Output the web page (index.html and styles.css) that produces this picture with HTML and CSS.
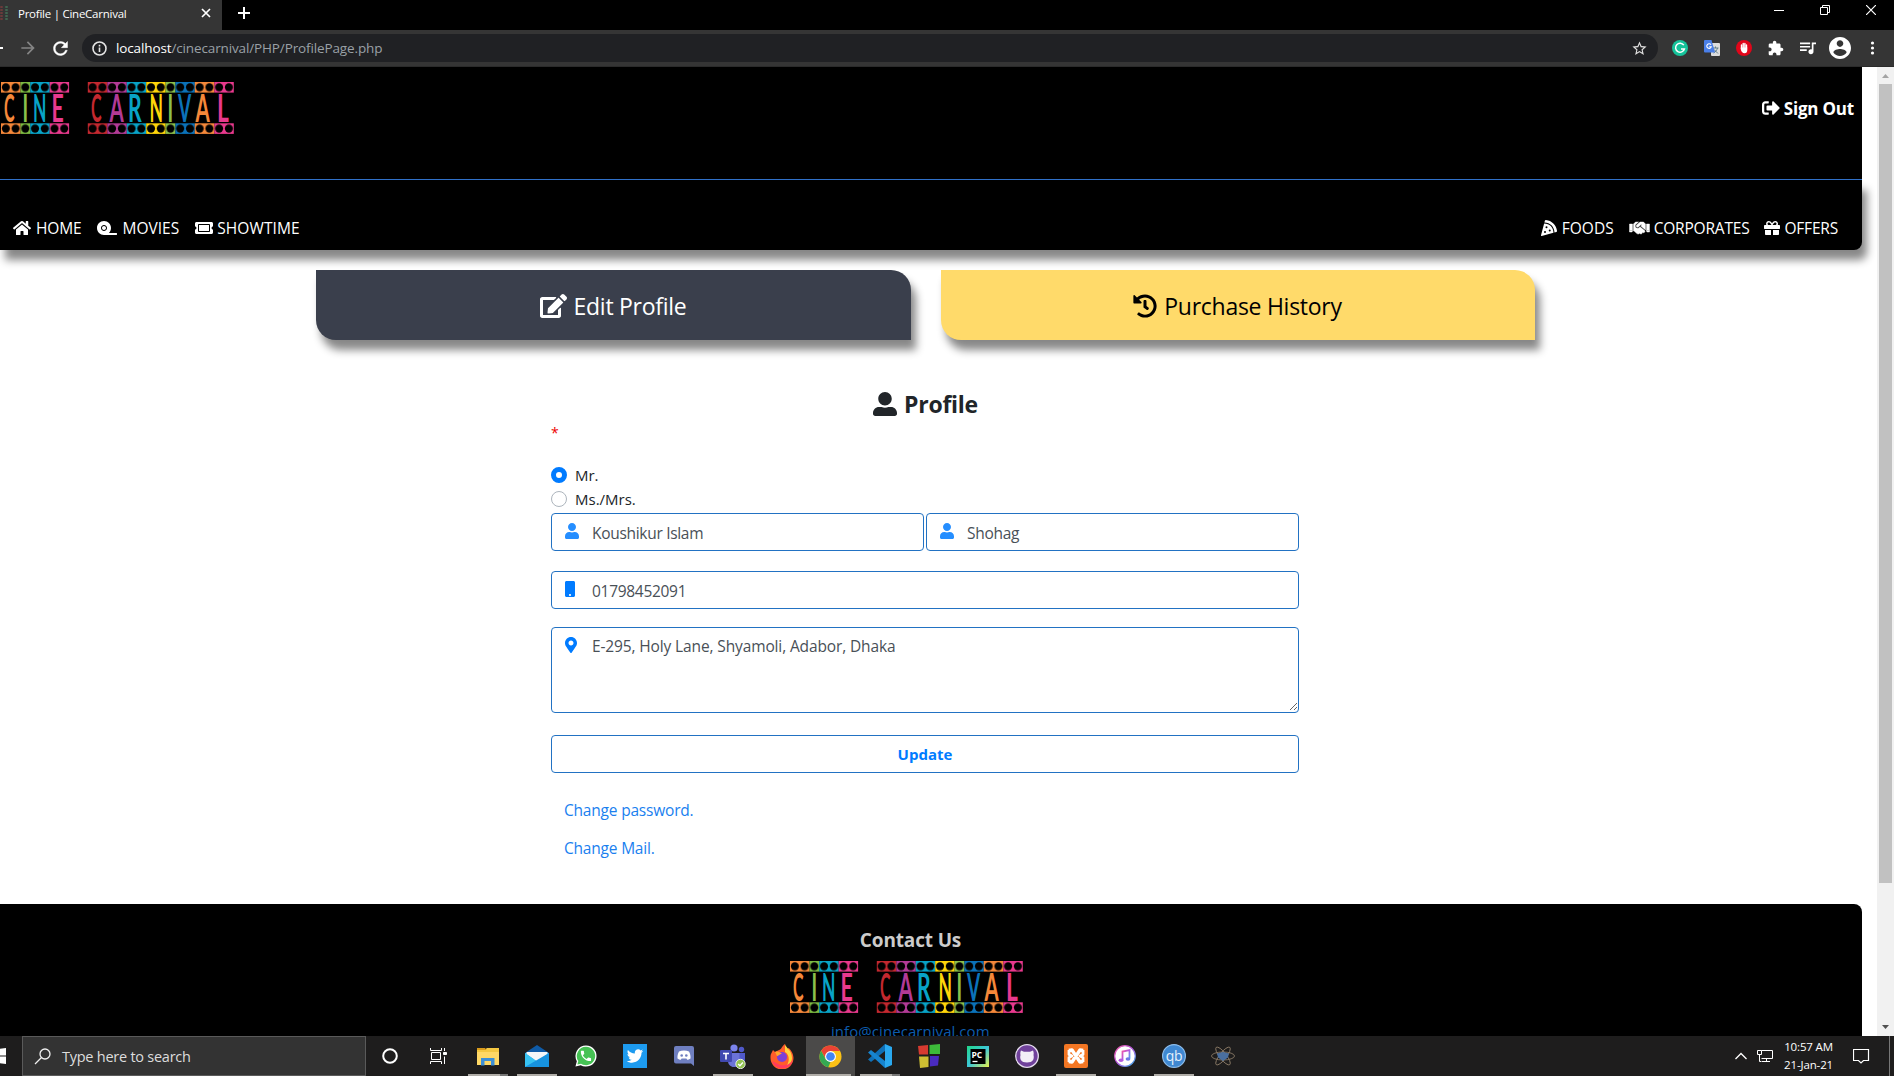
FILE: index.html
```html
<!DOCTYPE html>
<html lang="en">
<head>
<meta charset="utf-8">
<title>Profile | CineCarnival</title>
<link rel="stylesheet" href="styles.css">
</head>
<body>
<div class="titlebar">
  <div class="tab">
    <svg class="favicon" width="9" height="14" viewBox="0 0 9 14"><path d="M1.500 0v14" stroke="#6b3b3b" stroke-width="2.500" stroke-dasharray="2 1"/><path d="M6.500 0v14" stroke="#3f6650" stroke-width="2.500" stroke-dasharray="2 1"/></svg>
    <span class="tab-title">Profile | CineCarnival</span>
    <svg class="tab-close" width="10" height="10" viewBox="0 0 10 10"><path d="M1 1l8 8M9 1l-8 8" stroke="#fff" stroke-width="1.700"/></svg>
  </div>
  <svg class="new-tab" width="12" height="12" viewBox="0 0 12 12"><path d="M6 0v12M0 6h12" stroke="#fff" stroke-width="2"/></svg>
  <div class="window-buttons">
    <svg width="10" height="10" viewBox="0 0 10 10"><path d="M0 5.500h10" stroke="#fff"/></svg>
    <svg width="10" height="10" viewBox="0 0 10 10" fill="none" stroke="#fff"><path d="M.5 2.500h7v7h-7zM2.500 2.500v-2h7v7h-2"/></svg>
    <svg width="10" height="10" viewBox="0 0 10 10"><path d="M0 0l10 10M10 0L0 10" stroke="#fff" stroke-width="1.200"/></svg>
  </div>
</div>
<div class="toolbar">
  <svg class="back" width="3" height="14" viewBox="0 0 3 14"><path d="M0 7h3" stroke="#fff" stroke-width="2"/></svg>
  <svg class="forward" width="20" height="20" viewBox="0 0 24 24"><path fill="#858585" d="M12 4l-1.410 1.410L16.170 11H4v2h12.170l-5.580 5.590L12 20l8-8z"/></svg>
  <svg class="reload" width="21" height="21" viewBox="0 0 24 24"><path fill="#fff" stroke="#fff" stroke-width=".5" d="M17.650 6.350C16.200 4.900 14.210 4 12 4c-4.420 0-7.990 3.580-7.990 8s3.570 8 7.990 8c3.730 0 6.840-2.550 7.730-6h-2.080c-.82 2.330-3.040 4-5.650 4-3.310 0-6-2.690-6-6s2.690-6 6-6c1.660 0 3.140.69 4.220 1.780L13 11h7V4l-2.350 2.350z"/></svg>
  <div class="omnibox">
    <svg width="15" height="15" viewBox="0 0 15 15" fill="none" stroke="#e4e4e4" stroke-width="1.600"><circle cx="7.500" cy="7.500" r="6.500"/><path d="M7.500 6.500v4.500M7.500 3.800v1.700"/></svg>
    <span class="url"><b>localhost</b>/cinecarnival/PHP/ProfilePage.php</span>
    <svg class="star" width="17" height="17" viewBox="0 0 24 24"><path fill="#e0e0e0" d="M22 9.240l-7.190-.62L12 2 9.190 8.630 2 9.240l5.460 4.730L5.820 21 12 17.270 18.180 21l-1.630-7.030L22 9.240zM12 15.400l-3.760 2.270 1-4.280-3.320-2.880 4.380-.38L12 6.100l1.710 4.040 4.380.38-3.320 2.880 1 4.280L12 15.400z"/></svg>
  </div>
  <div class="extensions">
    <svg width="16" height="16" viewBox="0 0 16 16"><circle cx="8" cy="8" r="8" fill="#15c39a"/><path d="M11.800 5.200A4.500 4.500 0 1 0 12.400 9H9" fill="none" stroke="#fff" stroke-width="1.500"/></svg>
    <svg width="16" height="16" viewBox="0 0 16 16"><rect x="7" y="3" width="9" height="13" rx="1" fill="#dcdcdc"/><path d="M8.500 8h6M11.500 6.500V8M13.500 8c-.5 2-2 4-4 5M10 9.500l4 4" stroke="#5f7f8a" fill="none"/><path d="M1 0h6.500L11 12.500H1a1 1 0 0 1-1-1V1a1 1 0 0 1 1-1z" fill="#4a7fe8"/><path d="M7 4.800A2.300 2.300 0 1 0 7.300 6.700H5.200" fill="none" stroke="#fff" stroke-width="1.100"/></svg>
    <svg width="16" height="16" viewBox="0 0 16 16"><circle cx="8" cy="8" r="8" fill="#e1061a"/><path d="M5.500 9V5M7.200 8V3.500M8.900 8V3.500M10.500 8V5" stroke="#fff" stroke-width="1.400" stroke-linecap="round"/><path d="M4.800 7.500h6.500V10c0 2-1 3.300-2.800 3.300C6.500 13.300 5 11.500 4.800 9z" fill="#fff"/></svg>
    <svg width="16" height="16" viewBox="1 0 23 23"><path fill="#fff" d="M20.500 11H19V7c0-1.100-.9-2-2-2h-4V3.500C13 2.120 11.880 1 10.500 1S8 2.120 8 3.500V5H4c-1.100 0-1.990.9-1.990 2v3.800H3.500c1.490 0 2.700 1.210 2.700 2.700s-1.210 2.700-2.700 2.700H2V20c0 1.100.9 2 2 2h3.800v-1.500c0-1.490 1.210-2.700 2.700-2.700 1.490 0 2.700 1.210 2.700 2.700V22H17c1.100 0 2-.9 2-2v-4h1.500c1.380 0 2.500-1.120 2.500-2.500S21.880 11 20.500 11z"/></svg>
    <svg width="16" height="16" viewBox="3 3 19 19"><path fill="#fff" d="M15 6H3v2h12V6zm0 4H3v2h12v-2zM3 16h8v-2H3v2zM17 6v8.180c-.31-.11-.65-.18-1-.18-1.660 0-3 1.340-3 3s1.340 3 3 3 3-1.340 3-3V8h3V6h-5z"/></svg>
    <svg class="avatar" width="22" height="22" viewBox="2 2 20 20"><path fill="#fff" d="M12 2C6.480 2 2 6.480 2 12s4.480 10 10 10 10-4.480 10-10S17.520 2 12 2zm0 3c1.660 0 3 1.340 3 3s-1.340 3-3 3-3-1.340-3-3 1.340-3 3-3zm0 14.200c-2.500 0-4.710-1.280-6-3.220.03-1.990 4-3.080 6-3.080 1.990 0 5.970 1.090 6 3.080-1.290 1.940-3.500 3.220-6 3.220z"/></svg>
    <svg width="16" height="16" viewBox="0 0 16 16" fill="#fff"><circle cx="8.500" cy="3" r="1.600"/><circle cx="8.500" cy="8" r="1.600"/><circle cx="8.500" cy="13" r="1.600"/></svg>
  </div>
</div>

<div class="viewport">
  <div class="page">
    <header class="site-header">
      <div class="brand-row">
        <svg class="logo" width="236" height="54" viewBox="0 0 236 54">
          <defs>
            <pattern id="holes" width="9.730" height="10.600" patternUnits="userSpaceOnUse"><circle cx="4.865" cy="5.300" r="4" fill="#000"/></pattern>
            <g id="strip">
              <path fill="#f5883a" d="M0 0h19.500v10.600H0z"/><path fill="#7dbb42" d="M19.500 0h9.700v10.600h-9.700z"/><path fill="#08a3c7" d="M29.200 0h19.500v10.600H29.200z"/><path fill="#e8398d" d="M48.700 0h19.400v10.600H48.700z"/><path fill="url(#holes)" d="M0 0h68.110v10.600H0z"/>
              <g transform="translate(86.800)"><path fill="#c4282f" d="M0 0h19.500v10.600H0z"/><path fill="#b23a96" d="M19.500 0H39v10.600H19.500z"/><path fill="#08a3c7" d="M39 0h19.400v10.600H39z"/><path fill="#ffd50a" d="M58.400 0h19.400v10.600H58.400z"/><path fill="#8cc04b" d="M77.800 0h9.800v10.600h-9.800z"/><path fill="#0b72b9" d="M87.600 0H107v10.600H87.600z"/><path fill="#f5883a" d="M107 0h19.500v10.600H107z"/><path fill="#e8398d" d="M126.500 0h19.500v10.600h-19.500z"/><path fill="url(#holes)" d="M0 0h146v10.600H0z"/></g>
            </g>
          </defs>
          <use href="#strip" x="1" y="0"/><use href="#strip" x="1" y="41.300"/>
          <g class="logo-letters">
            <text transform="translate(4 40) scale(.42 1)" fill="#f5883a">C</text><text transform="translate(22.500 40) scale(.5 1)" fill="#8cc04b">I</text><text transform="translate(33 40) scale(.46 1)" fill="#08a3c7">N</text><text transform="translate(51.500 40) scale(.56 1)" fill="#e8398d">E</text>
            <text transform="translate(91 40) scale(.42 1)" fill="#c4282f">C</text><text transform="translate(109.500 40) scale(.54 1)" fill="#b23a96">A</text><text transform="translate(128 40) scale(.56 1)" fill="#08a3c7">R</text><text transform="translate(149.500 40) scale(.46 1)" fill="#ffd50a">N</text><text transform="translate(167.500 40) scale(.5 1)" fill="#8cc04b">I</text><text transform="translate(178 40) scale(.5 1)" fill="#0b72b9">V</text><text transform="translate(195.500 40) scale(.54 1)" fill="#f5883a">A</text><text transform="translate(217 40) scale(.6 1)" fill="#e8398d">L</text>
          </g>
        </svg>
        <a class="sign-out" href="#"><svg width="18" height="18" viewBox="0 0 512 512"><path fill="currentColor" d="M497 273L329 441c-15 15-41 4.500-41-17v-96H152c-13.300 0-24-10.700-24-24v-96c0-13.300 10.700-24 24-24h136V88c0-21.400 25.900-32 41-17l168 168c9.300 9.400 9.300 24.600 0 34zM192 436v-40c0-6.600-5.400-12-12-12H96c-17.700 0-32-14.300-32-32V160c0-17.700 14.300-32 32-32h84c6.600 0 12-5.400 12-12V76c0-6.600-5.400-12-12-12H96c-53 0-96 43-96 96v192c0 53 43 96 96 96h84c6.600 0 12-5.400 12-12z"/></svg><span>Sign Out</span></a>
      </div>
      <nav class="nav">
        <a class="home" href="#"><svg width="18" height="16" viewBox="0 0 576 512"><path fill="currentColor" d="M280.370 148.260L96 300.110V464a16 16 0 0 0 16 16l112.060-.29a16 16 0 0 0 15.920-16V368a16 16 0 0 1 16-16h64a16 16 0 0 1 16 16v95.640a16 16 0 0 0 16 16.050L464 480a16 16 0 0 0 16-16V300L295.670 148.260a12.190 12.190 0 0 0-15.300 0zM571.600 251.470L488 182.560V44.050a12 12 0 0 0-12-12h-56a12 12 0 0 0-12 12v72.610L318.470 43a48 48 0 0 0-61 0L4.340 251.470a12 12 0 0 0-1.600 16.900l25.500 31A12 12 0 0 0 45.150 301l235.220-193.740a12.190 12.190 0 0 1 15.300 0L530.900 301a12 12 0 0 0 16.900-1.600l25.500-31a12 12 0 0 0-1.700-16.930z"/></svg><span>HOME</span></a>
        <a class="movies" href="#"><svg width="20" height="16" viewBox="0 0 640 512"><path fill="currentColor" d="M224 192c-35.300 0-64 28.700-64 64s28.700 64 64 64 64-28.700 64-64-28.700-64-64-64zm400 224H380.600c41.500-40.700 67.400-97.300 67.400-160 0-123.700-100.300-224-224-224S0 132.300 0 256s100.300 224 224 224h400c8.800 0 16-7.200 16-16v-32c0-8.800-7.200-16-16-16zm-400-64c-53 0-96-43-96-96s43-96 96-96 96 43 96 96-43 96-96 96z"/></svg><span>MOVIES</span></a>
        <a class="showtime" href="#"><svg width="18" height="16" viewBox="0 0 576 512"><path fill="currentColor" d="M128 160h320v192H128V160zm400 96c0 26.510 21.490 48 48 48v96c0 26.510-21.490 48-48 48H48c-26.510 0-48-21.490-48-48v-96c26.510 0 48-21.490 48-48s-21.490-48-48-48v-96c0-26.510 21.490-48 48-48h480c26.510 0 48 21.490 48 48v96c-26.510 0-48 21.490-48 48zm-48-104c0-13.255-10.745-24-24-24H120c-13.255 0-24 10.745-24 24v208c0 13.255 10.745 24 24 24h336c13.255 0 24-10.745 24-24V152z"/></svg><span>SHOWTIME</span></a>
        <a class="foods" href="#"><svg width="16" height="16" viewBox="0 0 512 512"><path fill="currentColor" d="M158.870.15c-16.160-1.520-31.200 8.420-35.330 24.120l-14.810 56.270c187.620 5.490 314.540 130.610 322.480 317l56.940-15.780c15.720-4.360 25.490-19.680 23.620-35.900C490.890 165.080 340.780 17.320 158.870.15zm-58.470 112L.55 491.640a16.210 16.210 0 0 0 20 19.750l379-105.100c-4.270-174.890-123.080-292.140-299.150-294.100zM128 416a32 32 0 1 1 32-32 32 32 0 0 1-32 32zm48-152a32 32 0 1 1 32-32 32 32 0 0 1-32 32zm104 104a32 32 0 1 1 32-32 32 32 0 0 1-32 32z"/></svg><span>FOODS</span></a>
        <a class="corporates" href="#"><svg width="21" height="16" viewBox="0 0 640 512"><path fill="currentColor" stroke="currentColor" stroke-width="14" d="M434.700 64h-85.900c-8 0-15.700 3-21.600 8.400l-98.300 90c-.1.1-.2.3-.3.4-16.600 15.600-16.300 40.500-2.100 56 12.700 13.900 39.400 17.600 56.100 2.700.1-.1.3-.1.4-.2l79.900-73.200c6.500-5.900 16.700-5.500 22.600 1 6 6.500 5.500 16.600-1 22.600l-26.100 23.900L504 313.800c2.900 2.400 5.500 5 7.900 7.700V128l-54.600-54.600c-5.900-6-14.100-9.400-22.600-9.400zM544 128.200v223.900c0 17.700 14.300 32 32 32h64V128.200h-96zm48 223.900c-8.800 0-16-7.200-16-16s7.200-16 16-16 16 7.200 16 16-7.200 16-16 16zM0 384h64c17.700 0 32-14.300 32-32V128.200H0V384zm48-63.900c8.800 0 16 7.200 16 16s-7.200 16-16 16-16-7.200-16-16c0-8.900 7.200-16 16-16zm435.900 18.600L334.600 217.500l-30 27.500c-29.700 27.100-75.200 24.500-101.700-4.400-26.900-29.400-24.800-74.900 4.400-101.700L289.100 64h-83.800c-8.500 0-16.600 3.400-22.600 9.400L128 128v223.900h18.300l90.500 81.900c27.400 22.300 67.700 18.100 90-9.300l.2-.2 17.900 15.500c15.900 13 39.400 10.500 52.300-5.400l31.400-38.600 5.400 4.400c13.700 11.100 33.900 9.100 45-4.700l9.500-11.700c11.200-13.800 9.100-33.900-4.600-45.100z"/></svg><span>CORPORATES</span></a>
        <a class="offers" href="#"><svg width="16" height="16" viewBox="0 0 512 512"><path fill="currentColor" d="M32 448c0 17.700 14.300 32 32 32h160V320H32v128zm256 32h160c17.700 0 32-14.300 32-32V320H288v160zm192-320h-42.100c6.200-12.100 10.100-25.500 10.100-40 0-48.500-39.500-88-88-88-41.600 0-68.500 21.300-103 68.300-34.500-47-61.400-68.300-103-68.300-48.500 0-88 39.500-88 88 0 14.500 3.800 27.900 10.100 40H32c-17.700 0-32 14.300-32 32v80c0 8.800 7.200 16 16 16h480c8.800 0 16-7.200 16-16v-80c0-17.700-14.300-32-32-32zm-326.100 0c-22.100 0-40-17.900-40-40s17.900-40 40-40c19.900 0 34.600 3.300 86.100 80h-86.100zm206.100 0h-86.100c51.400-76.500 65.700-80 86.100-80 22.100 0 40 17.900 40 40s-17.900 40-40 40z"/></svg><span>OFFERS</span></a>
      </nav>
    </header>

    <div class="profile-tabs">
      <a class="profile-tab edit" href="#"><svg width="27" height="24" viewBox="0 0 576 512"><path fill="currentColor" d="M402.600 83.200l90.200 90.200c3.800 3.800 3.800 10 0 13.800L274.400 405.600l-92.800 10.300c-12.400 1.400-22.900-9.100-21.500-21.500l10.300-92.800L388.800 83.200c3.800-3.800 10-3.800 13.800 0zm162-22.900l-48.800-48.800c-15.200-15.200-39.900-15.200-55.200 0l-35.400 35.400c-3.800 3.800-3.800 10 0 13.800l90.200 90.200c3.800 3.800 10 3.800 13.800 0l35.400-35.400c15.200-15.300 15.200-40 0-55.200zM384 346.200V448H64V128h229.800c3.200 0 6.200-1.300 8.500-3.500l40-40c7.600-7.600 2.200-20.500-8.500-20.500H48C21.500 64 0 85.500 0 112v352c0 26.500 21.500 48 48 48h352c26.500 0 48-21.500 48-48V306.200c0-10.700-12.900-16-20.500-8.500l-40 40c-2.200 2.300-3.500 5.300-3.500 8.500z"/></svg><span>Edit Profile</span></a>
      <a class="profile-tab history" href="#"><svg width="24" height="24" viewBox="0 0 512 512"><path fill="currentColor" d="M504 255.531c.253 136.640-111.180 248.372-247.820 248.468-59.015.042-113.223-20.530-155.822-54.911-11.077-8.940-11.905-25.541-1.839-35.607l11.267-11.267c8.609-8.609 22.353-9.551 31.891-1.984C173.062 425.135 212.781 440 256 440c101.705 0 184-82.311 184-184 0-101.705-82.311-184-184-184-48.814 0-93.149 18.969-126.068 49.932l50.754 50.754c10.080 10.080 2.941 27.314-11.313 27.314H24c-8.837 0-16-7.163-16-16V38.627c0-14.254 17.234-21.393 27.314-11.314l49.372 49.372C129.209 34.136 189.552 8 256 8c136.810 0 247.747 110.780 248 247.531zm-180.912 78.784l9.823-12.630c8.138-10.463 6.253-25.542-4.210-33.679L288 256.349V152c0-13.255-10.745-24-24-24h-16c-13.255 0-24 10.745-24 24v135.651l65.409 50.874c10.463 8.137 25.541 6.253 33.679-4.210z"/></svg><span>Purchase History</span></a>
    </div>

    <h2 class="profile-heading"><svg width="24" height="24" viewBox="0 0 512 512"><path fill="currentColor" d="M256 288c79.500 0 144-64.500 144-144S335.500 0 256 0 112 64.500 112 144s64.500 144 144 144zm128 32h-55.100c-22.200 10.200-46.900 16-72.900 16s-50.600-5.800-72.900-16H128C57.300 320 0 377.300 0 448v16c0 26.500 21.500 48 48 48h416c26.500 0 48-21.500 48-48v-16c0-70.700-57.300-128-128-128z"/></svg><span>Profile</span></h2>

    <form class="profile-form">
      <div class="required">*</div>
      <label class="radio"><input type="radio" name="title" checked><span>Mr.</span></label>
      <label class="radio"><input type="radio" name="title"><span>Ms./Mrs.</span></label>
      <div class="name-row">
        <div class="field">
          <svg class="soft" width="14" height="16" viewBox="0 0 448 512"><path fill="#007bff" d="M224 256c70.700 0 128-57.300 128-128S294.700 0 224 0 96 57.300 96 128s57.300 128 128 128zm89.600 32h-16.700c-22.200 10.200-46.900 16-72.900 16s-50.600-5.800-72.900-16h-16.700C60.200 288 0 348.200 0 422.400V464c0 26.500 21.500 48 48 48h352c26.500 0 48-21.500 48-48v-41.600c0-74.200-60.200-134.400-134.400-134.400z"/></svg>
          <input type="text" value="Koushikur Islam">
        </div>
        <div class="field">
          <svg class="soft" width="14" height="16" viewBox="0 0 448 512"><path fill="#007bff" d="M224 256c70.700 0 128-57.300 128-128S294.700 0 224 0 96 57.300 96 128s57.300 128 128 128zm89.600 32h-16.700c-22.200 10.200-46.900 16-72.900 16s-50.600-5.800-72.900-16h-16.700C60.200 288 0 348.200 0 422.400V464c0 26.500 21.500 48 48 48h352c26.500 0 48-21.500 48-48v-41.600c0-74.200-60.200-134.400-134.400-134.400z"/></svg>
          <input type="text" value="Shohag">
        </div>
      </div>
      <div class="field phone">
        <svg width="10" height="16" viewBox="0 0 320 512"><path fill="#007bff" d="M272 0H48C21.500 0 0 21.500 0 48v416c0 26.500 21.500 48 48 48h224c26.500 0 48-21.500 48-48V48c0-26.500-21.500-48-48-48zM160 480c-17.700 0-32-14.300-32-32s14.300-32 32-32 32 14.300 32 32-14.300 32-32 32z"/></svg>
        <input type="text" value="01798452091">
      </div>
      <div class="field address">
        <svg width="12" height="16" viewBox="0 0 384 512"><path fill="#007bff" d="M172.268 501.670C26.970 291.031 0 269.413 0 192 0 85.961 85.961 0 192 0s192 85.961 192 192c0 77.413-26.970 99.031-172.268 309.670-9.535 13.774-29.930 13.773-39.464 0zM192 272c44.183 0 80-35.817 80-80s-35.817-80-80-80-80 35.817-80 80 35.817 80 80 80z"/></svg>
        <textarea spellcheck="false">E-295, Holy Lane, Shyamoli, Adabor, Dhaka</textarea>
      </div>
      <button type="button" class="update">Update</button>
      <a class="form-link" href="#">Change password.</a>
      <a class="form-link" href="#">Change Mail.</a>
    </form>

    <footer class="site-footer">
      <div class="contact-title">Contact Us</div>
      <svg class="logo" width="236" height="54" viewBox="0 0 236 54">
        <use href="#strip" x="1" y="0"/><use href="#strip" x="1" y="41.300"/>
        <g class="logo-letters">
          <text transform="translate(4 40) scale(.42 1)" fill="#f5883a">C</text><text transform="translate(22.500 40) scale(.5 1)" fill="#8cc04b">I</text><text transform="translate(33 40) scale(.46 1)" fill="#08a3c7">N</text><text transform="translate(51.500 40) scale(.56 1)" fill="#e8398d">E</text>
          <text transform="translate(91 40) scale(.42 1)" fill="#c4282f">C</text><text transform="translate(109.500 40) scale(.54 1)" fill="#b23a96">A</text><text transform="translate(128 40) scale(.56 1)" fill="#08a3c7">R</text><text transform="translate(149.500 40) scale(.46 1)" fill="#ffd50a">N</text><text transform="translate(167.500 40) scale(.5 1)" fill="#8cc04b">I</text><text transform="translate(178 40) scale(.5 1)" fill="#0b72b9">V</text><text transform="translate(195.500 40) scale(.54 1)" fill="#f5883a">A</text><text transform="translate(217 40) scale(.6 1)" fill="#e8398d">L</text>
        </g>
      </svg>
      <a class="contact-mail" href="#">info@cinecarnival.com</a>
    </footer>
  </div>
  <div class="scrollbar">
    <svg width="17" height="17" viewBox="0 0 17 17"><path d="M5 11h7L8.500 7z" fill="#a3a3a3"/></svg>
    <div class="thumb"></div>
    <svg width="17" height="17" viewBox="0 0 17 17"><path d="M5 6h7l-3.500 4z" fill="#505050"/></svg>
  </div>
</div>

<div class="taskbar">
  <svg class="start" width="6" height="16" viewBox="0 0 6 16"><path d="M0 .8L6 0v7.500H0zM0 8.500h6V16l-6-.8z" fill="#fff"/></svg>
  <div class="search"><svg width="18" height="17" viewBox="0 0 18 17" fill="none" stroke="#f0f0f0" stroke-width="1.300"><circle cx="11" cy="6" r="5"/><path d="M7.500 9.500L1 16"/></svg><span>Type here to search</span></div>
  <div class="task"><svg width="16" height="16" viewBox="0 0 16 16"><circle cx="8" cy="8" r="6.800" fill="none" stroke="#fff" stroke-width="2"/></svg></div>
  <div class="task"><svg width="17" height="16" viewBox="0 0 17 16" fill="none" stroke="#fff"><path d="M1.500 4.500h9v7h-9zM.5 0v2.500h11V0M.5 16v-2.500h11V16M14.500 0v3M14.500 8.500V16"/><path d="M13.500 4.500h3v2h-3z" fill="#fff"/></svg></div>
  <div class="task running more"><svg width="22" height="19" viewBox="0 0 22 19"><path d="M0 2.500h8l2-1.500h12v17H0z" fill="#f5c842"/><path d="M0 1h8l1.500 2H0z" fill="#d99b1c"/><path d="M0 5h22v13H0z" fill="#ffd866"/><path d="M4 11h13.500v7.500H14V14H7.500v4.500H4z" fill="#3d8fd6"/></svg></div>
  <div class="task running"><svg width="24" height="22" viewBox="0 0 24 22"><path d="M0 8L12 0l12 8z" fill="#0f5ba7"/><path d="M0 8h24v14H0z" fill="#1fa3e8"/><path d="M1.500 7h21v2L12 16.500 1.500 9z" fill="#f4f6f8"/><path d="M0 8l12 8.500L0 22z" fill="#37c2f2"/><path d="M24 8L0 22h24z" fill="#1793df"/></svg></div>
  <div class="task"><svg width="22" height="22" viewBox="0 0 24 24"><path d="M12 .5A11.500 11.500 0 0 0 2 17.700L.5 23.500l5.800-1.500A11.500 11.500 0 1 0 12 .5z" fill="#fff"/><path d="M12 2A10 10 0 0 0 3.600 17.500l-1 3.900 4-1A10 10 0 1 0 12 2z" fill="#46c254"/><path transform="translate(4.500 4.500) scale(.62)" fill="#fff" d="M6.620 10.790c1.440 2.830 3.760 5.140 6.590 6.590l2.200-2.200c.27-.27.67-.36 1.020-.24 1.120.37 2.330.57 3.570.57.55 0 1 .45 1 1V20c0 .55-.45 1-1 1-9.390 0-17-7.610-17-17 0-.55.45-1 1-1h3.500c.55 0 1 .45 1 1 0 1.250.2 2.450.57 3.570.11.35.03.74-.25 1.020l-2.200 2.200z"/></svg></div>
  <div class="task"><svg width="24" height="24" viewBox="-120 -120 752 752"><path fill="#1d9bf0" d="M-120-120h752v752h-752z"/><path fill="#fff" d="M459.370 151.716c.325 4.548.325 9.097.325 13.645 0 138.720-105.583 298.558-298.558 298.558-59.452 0-114.680-17.219-161.137-47.106 8.447.974 16.568 1.299 25.340 1.299 49.055 0 94.213-16.568 130.274-44.832-46.132-.975-84.792-31.188-98.112-72.772 6.498.974 12.995 1.624 19.818 1.624 9.421 0 18.843-1.300 27.614-3.573-48.081-9.747-84.143-51.980-84.143-102.985v-1.299c13.969 7.797 30.214 12.670 47.431 13.319-28.264-18.843-46.781-51.005-46.781-87.391 0-19.492 5.197-37.360 14.294-52.954 51.655 63.675 129.300 105.258 216.365 109.807-1.624-7.797-2.599-15.918-2.599-24.040 0-57.828 46.782-104.934 104.934-104.934 30.213 0 57.502 12.670 76.670 33.137 23.715-4.548 46.456-13.320 66.599-25.340-7.798 24.366-24.366 44.833-46.132 57.827 21.117-2.273 41.584-8.122 60.426-16.243-14.292 20.791-32.161 39.308-52.628 54.253z"/></svg></div>
  <div class="task"><svg width="20" height="20" viewBox="0 0 20 20"><path d="M2 0h16a2 2 0 0 1 2 2v18l-3-2.500H2a2 2 0 0 1-2-2V2a2 2 0 0 1 2-2z" fill="#6f7fc0"/><path d="M5 5.500c3-1.300 7-1.300 10 0 1.300 2.500 1.700 4.700 1.500 7-1.200 1-2.300 1.300-3.300 1.300l-.8-1.300H7.600l-.8 1.300c-1 0-2.100-.3-3.300-1.300-.2-2.300.2-4.500 1.500-7z" fill="#fff"/><circle cx="7.700" cy="9.500" r="1.300" fill="#6f7fc0"/><circle cx="12.300" cy="9.500" r="1.300" fill="#6f7fc0"/></svg></div>
  <div class="task running"><svg width="26" height="25" viewBox="0 0 26 25"><circle cx="14" cy="4" r="3.600" fill="#7b83eb"/><circle cx="21.500" cy="5.500" r="2.700" fill="#5059c9"/><path d="M18 9h7v6c0 3-2 5-5 5z" fill="#5059c9"/><path d="M8 9h11.500v8c0 4-2.500 6-5.700 6S8 20.500 8 17z" fill="#6b73d8"/><rect x="0" y="6" width="12" height="12" rx="1" fill="#4048b0"/><path d="M3 9.500h6M6 9.500v6" stroke="#fff" stroke-width="1.600"/><circle cx="20.500" cy="20" r="4.700" fill="#92c353" stroke="#fff" stroke-width=".8"/><path d="M18.200 20l1.700 1.800 3-3.300" stroke="#fff" fill="none" stroke-width="1.300"/></svg></div>
  <div class="task"><svg width="24" height="25" viewBox="0 0 24 25"><path d="M1 10l2-4 2 2 4-2c2 0 3-4 6-6 0 3 1.500 4 2.500 5l1-1c2.500 2 5 6 5 10a11.500 11.500 0 0 1-23 0c0-2 0-3 .5-4z" fill="#ff5c2b"/><path d="M15 0c0 3 7 6 7 14 0 4-3 8-7 9 5-4 5-12 0-15z" fill="#ffd13b"/><path d="M2 17c2 6 8 8 13 7 4-1 7-4 8-8-4 5-8 6-13 5z" fill="#ff3a5e"/><circle cx="12" cy="13" r="5" fill="#7a3fd6"/><path d="M5 8c3-1 5 0 7 2-3 0-3 2-5 2z" fill="#ffa52b"/></svg></div>
  <div class="task running active"><svg width="23" height="23" viewBox="0 0 24 24"><circle cx="12" cy="12" r="11.500" fill="#fbc116"/><path d="M12 .5c4.500 0 8 2.300 10 5.800H12L7 14.500 2.300 6A11.500 11.500 0 0 1 12 .5z" fill="#ea4335"/><path d="M2.200 6L7 14.800 12 17.700l-2.300 5.600A11.500 11.500 0 0 1 2.200 6z" fill="#34a853"/><circle cx="12" cy="12" r="5.700" fill="#fff"/><circle cx="12" cy="12" r="4.500" fill="#4285f4"/></svg></div>
  <div class="task running more"><svg width="24" height="24" viewBox="0 0 24 24"><path d="M17 0l7 3v18l-7 3z" fill="#2aa9f0"/><path d="M17 0v7L3 18 0 15.500z" fill="#0f70b7"/><path d="M17 24v-7L3 6 0 8.500z" fill="#1684cf"/></svg></div>
  <div class="task"><svg width="22" height="24" viewBox="0 0 22 24"><path d="M0 2l10-1v9.500H1z" fill="#d63a30"/><path d="M11.500 1L22 0v10H11.500z" fill="#3dbb3a"/><path d="M1 12.500h9.500V23L2 24z" fill="#cdbf32"/><path d="M12 12h9l-1 9.500-8 1z" fill="#4a2bc0"/></svg></div>
  <div class="task"><svg width="22" height="23" viewBox="0 0 22 23"><defs><linearGradient id="pc" x1="0" y1="0" x2="1" y2="1"><stop offset="0" stop-color="#21d789"/><stop offset=".5" stop-color="#3cc7d8"/><stop offset="1" stop-color="#e8f04a"/></linearGradient></defs><path d="M0 1h22v21H0z" fill="url(#pc)"/><path d="M3.500 4h15v15h-15z"/><text class="pc-label" x="4.500" y="12.500" fill="#fff">PC</text><path d="M5.500 16.500h5" stroke="#fff" stroke-width="1.300"/></svg></div>
  <div class="task"><svg width="24" height="24" viewBox="0 0 24 24"><circle cx="12" cy="12" r="11.300" fill="#70419b" stroke="#e5dcee" stroke-width="1.300"/><path d="M6 6.500l3 1.200h6l3-1.200c.8 2 .8 3 .5 4.500 1 4-.5 7.500-6.500 7.500S4.500 15 5.500 11C5.200 9.500 5.200 8.500 6 6.500z" fill="#f3eef7"/></svg></div>
  <div class="task running"><svg width="24" height="24" viewBox="0 0 24 24"><rect width="24" height="24" rx="2" fill="#f37623"/><path d="M4.800 6.500L8 6l8 12 3.200-.5M19.200 6.500L16 6 8 18l-3.200-.5" fill="none" stroke="#fff" stroke-width="3.400" stroke-linejoin="round"/><path d="M5 6v4.500l3 1.500-3 1.500V18M19 6v4.500l-3 1.500 3 1.500V18" fill="none" stroke="#fff" stroke-width="2.800" stroke-linejoin="round"/></svg></div>
  <div class="task"><svg width="22" height="22" viewBox="0 0 22 22"><defs><linearGradient id="it" x1="0" y1="0" x2="1" y2="1"><stop offset="0" stop-color="#f25aa8"/><stop offset=".5" stop-color="#b45ae0"/><stop offset="1" stop-color="#35b8f0"/></linearGradient></defs><circle cx="11" cy="11" r="10.300" fill="#fff" stroke="url(#it)" stroke-width="1.200"/><path d="M8.500 15V6.500L15.500 5v8.500" fill="none" stroke="url(#it)" stroke-width="1.800"/><ellipse cx="7" cy="15.300" rx="2.400" ry="1.800" fill="#b45ae0"/><ellipse cx="14" cy="14" rx="2.400" ry="1.800" fill="#6f7ae8"/></svg></div>
  <div class="task running"><svg width="24" height="24" viewBox="0 0 24 24"><circle cx="12" cy="12" r="11.400" fill="#3f88d2" stroke="#8cbcea" stroke-width="1.200"/><text class="qb-label" x="3.800" y="16.500" fill="#e6f1fc">qb</text></svg></div>
  <div class="task"><svg width="24" height="20" viewBox="0 0 24 20" fill="none" stroke="#8a7a66" stroke-width=".9"><ellipse cx="12" cy="10" rx="11.500" ry="4"/><ellipse cx="12" cy="10" rx="11" ry="3.400" transform="rotate(52 12 10)"/><ellipse cx="12" cy="10" rx="11" ry="3.400" transform="rotate(-52 12 10)"/><path d="M6 7.500l6-1.500 6 1.500-1 4-5 3.500-5-3.500z" fill="#4a6f9f" stroke="none"/></svg></div>
  <div class="tray">
    <svg width="12" height="8" viewBox="0 0 12 8"><path d="M.5 7L6 1.500 11.500 7" fill="none" stroke="#fff" stroke-width="1.300"/></svg>
    <svg width="16" height="14" viewBox="0 0 16 14" fill="none" stroke="#fff"><path d="M4.500 1.500h11v8h-11M9.500 9.500v3M5 12.500h8M.5 1.500h4v4h-4zM2.500 5.500v7h2"/></svg>
    <div class="clock"><span>10:57 AM</span><span>21-Jan-21</span></div>
    <svg class="notice" width="17" height="17" viewBox="0 0 17 17"><path d="M.5 1.500h15v11h-5l-2.500 2.500-2.500-2.500h-5z" fill="none" stroke="#fff" stroke-width="1.200"/></svg>
  </div>
  <div class="show-desktop"></div>
</div>
</body>
</html>
```
FILE: styles.css
```css
* { box-sizing: border-box; }
body {
  margin: 0;
  height: 1076px;
  display: flex;
  flex-direction: column;
  overflow: hidden;
  background: #fff;
  font-family: "Open Sans", "Noto Sans", sans-serif;
  font-size: 15px;
  color: #212529;
}
a { text-decoration: none; color: inherit; }
svg { display: block; flex: none; }
span { white-space: nowrap; }

/* browser chrome */
.titlebar { height: 30px; flex: none; display: flex; background: #000; }
.tab {
  width: 222px;
  display: flex;
  align-items: center;
  padding: 0 11px 4px 0;
  background: #353535;
  color: #fff;
  font-size: 11.5px;
  letter-spacing: -0.25px;
}
.tab-title { margin-left: 9px; }
.tab-close { margin-left: auto; }
.new-tab { margin: 7px 0 0 16px; }
.window-buttons { display: flex; gap: 36px; margin: 5px 18px 0 auto; }
.toolbar {
  height: 37px;
  flex: none;
  display: flex;
  align-items: center;
  background: #353535;
  border-bottom: 1px solid #2b2b2b;
}
.forward { margin-left: 15px; }
.reload { margin-left: 12px; }
.omnibox {
  width: 1576px;
  height: 28px;
  margin-left: 11px;
  padding: 0 10px 0 10px;
  border-radius: 14px;
  display: flex;
  align-items: center;
  background: #202124;
}
.url { margin-left: 9px; color: #9aa0a6; font-size: 13.5px; letter-spacing: -0.13px; }
.url b { font-weight: 400; color: #fff; }
.star { margin-left: auto; }
.extensions { display: flex; align-items: center; gap: 16px; margin-left: 14px; }
.avatar { margin: 0 -3px; }

/* page */
.viewport { flex: 1; min-height: 0; display: flex; }
.page { flex: 1; min-width: 0; overflow: hidden; background: #fff; }
.site-header { width: 1862px; color: #fff; }
.brand-row {
  height: 113px;
  padding: 15px 8px 0 0;
  display: flex;
  justify-content: space-between;
  background: #000;
  border-bottom: 1px solid #3070c8;
}
.logo-letters text {
  font-family: Lato, "Open Sans", sans-serif;
  font-size: 38px;
  font-weight: 700;
}
.pc-label { font-size: 8.5px; font-weight: 700; }
.qb-label { font-size: 14px; letter-spacing: -0.3px; }
.sign-out {
  height: 24px;
  margin-top: 14px;
  display: flex;
  align-items: center;
  gap: 4px;
  font-size: 17px;
  font-weight: 700;
  letter-spacing: -0.2px;
}
.nav {
  height: 70px;
  padding: 37px 24px 0 13px;
  display: flex;
  align-items: flex-start;
  background: #000;
  border-radius: 0 0 8px 0;
  box-shadow: 5px 10px 8px #888;
}
.nav a { height: 22px; display: flex; align-items: center; gap: 4px; font-size: 15.5px; letter-spacing: -0.2px; }
.nav svg { margin-top: -1px; }
.nav .home { gap: 5px; letter-spacing: -0.15px; }
.nav .movies { margin-left: 16px; gap: 5px; letter-spacing: 0; }
.nav .showtime { margin-left: 16px; letter-spacing: 0.12px; }
.nav .foods { margin-left: auto; gap: 5px; letter-spacing: 0; }
.nav .corporates, .nav .offers { margin-left: 15px; }

.profile-tabs { display: grid; grid-template-columns: 595px 594px; gap: 30px; margin: 20px 0 0 316px; }
.profile-tab {
  height: 70px;
  padding: 1px 1px 0 0;
  display: flex;
  align-items: center;
  justify-content: center;
  gap: 7px;
  border-radius: 0 20px 0 20px;
  box-shadow: 5px 10px 8px #888;
  font-size: 23px;
  letter-spacing: -0.27px;
}
.profile-tab.edit { background: #3a3f4c; color: #fff; }
.profile-tab.history { background: #ffda6a; color: #000; }
.profile-heading {
  width: 1219px;
  height: 30px;
  margin: 49px 0 0 316px;
  display: flex;
  align-items: center;
  justify-content: center;
  gap: 7px;
  font-size: 23px;
  font-weight: 700;
  letter-spacing: -0.25px;
}
.profile-form {
  width: 748px;
  margin-left: 551px;
  display: flex;
  flex-direction: column;
}
.required { height: 44px; padding-top: 2px; color: #e00; font-size: 14px; line-height: 24px; }
.radio { height: 24px; display: flex; align-items: center; gap: 8px; }
.radio input {
  appearance: none;
  width: 16px;
  height: 16px;
  margin: 0;
  border: 1px solid #adb5bd;
  border-radius: 50%;
  background: #fff;
}
.radio input:checked { border: 5px solid #007bff; }
.name-row { display: grid; grid-template-columns: 373px 373px; gap: 2px; margin-top: 2px; }
.field {
  height: 38px;
  padding: 9px 0 0 13px;
  display: flex;
  border: 1px solid #2272c3;
  border-radius: 4px;
}
.field svg { margin-right: 13px; }
.field .soft { opacity: 0.85; }
.field input, .field textarea {
  flex: 1;
  min-width: 0;
  height: 24px;
  margin: -2px 0 0;
  padding: 0;
  border: 0;
  outline: 0;
  background: transparent;
  color: #495057;
  font: inherit;
  font-size: 15.5px;
  line-height: 24px;
  letter-spacing: -0.3px;
}
.field.phone { margin-top: 20px; }
.field.phone svg { margin-right: 17px; }
.field.address { height: 86px; margin-top: 18px; }
.field.address svg { margin-right: 15px; }
.field.address textarea { height: 77px; margin-top: -3px; resize: vertical; letter-spacing: -0.13px; }
.update {
  height: 38px;
  margin-top: 22px;
  border: 1px solid #2272c3;
  border-radius: 4px;
  background: #fff;
  color: #007bff;
  font: 700 15px "Open Sans", "Noto Sans", sans-serif;
}
.form-link { margin: 25px 0 0 13px; height: 24px; line-height: 24px; color: #1a7fef; font-size: 15.5px; letter-spacing: -0.2px; }
.form-link + .form-link { margin-top: 14px; }

.site-footer {
  width: 1862px;
  height: 200px;
  margin-top: 44px;
  padding-top: 24px;
  background: #000;
  border-radius: 0 8px 0 0;
}
.contact-title { width: 1821px; height: 25px; line-height: 25px; text-align: center; color: #ccc; font-size: 19px; font-weight: 700; letter-spacing: -0.15px; }
.site-footer .logo { margin: 8px 0 0 789px; }
.contact-mail { display: block; margin-left: 831px; height: 24px; margin-top: 4px; line-height: 24px; color: #0d5cad; letter-spacing: 0.06px; }

.scrollbar { width: 17px; display: flex; flex-direction: column; align-items: center; background: #f1f1f1; }
.thumb { width: 13px; height: 799px; background: #c1c1c1; }
.scrollbar svg:last-child { margin-top: auto; }

/* taskbar */
.taskbar { height: 40px; flex: none; display: flex; align-items: center; background: #1e1d1d; }
.search {
  width: 344px;
  height: 40px;
  margin: 0 -1px 0 16px;
  padding-left: 11px;
  display: flex;
  align-items: center;
  gap: 10px;
  background: #333;
  border: 1px solid #5a5a5a;
  color: #ddd;
  font-size: 14.5px;
  letter-spacing: -0.25px;
}
.task {
  position: relative;
  width: 49px;
  height: 40px;
  display: flex;
  align-items: center;
  justify-content: center;
}
.task.running::after {
  content: "";
  position: absolute;
  left: 5px;
  right: 4px;
  bottom: 0;
  height: 2px;
  background: #b0ada8;
}
.task.more::after { background: linear-gradient(90deg, #b0ada8 32px, #777 32px); }
.task.active { background: #4b4a49; }
.task.active::after { left: 0; right: 4px; }
.tray { margin-left: auto; display: flex; align-items: center; gap: 10px; }
.clock { display: flex; flex-direction: column; align-items: center; margin-left: 1px; color: #fff; font-size: 11.5px; line-height: 18px; letter-spacing: -0.15px; }
.notice { margin-left: 10px; }
.show-desktop { width: 5px; height: 40px; margin-left: 19px; border-left: 1px solid #777; }
```
